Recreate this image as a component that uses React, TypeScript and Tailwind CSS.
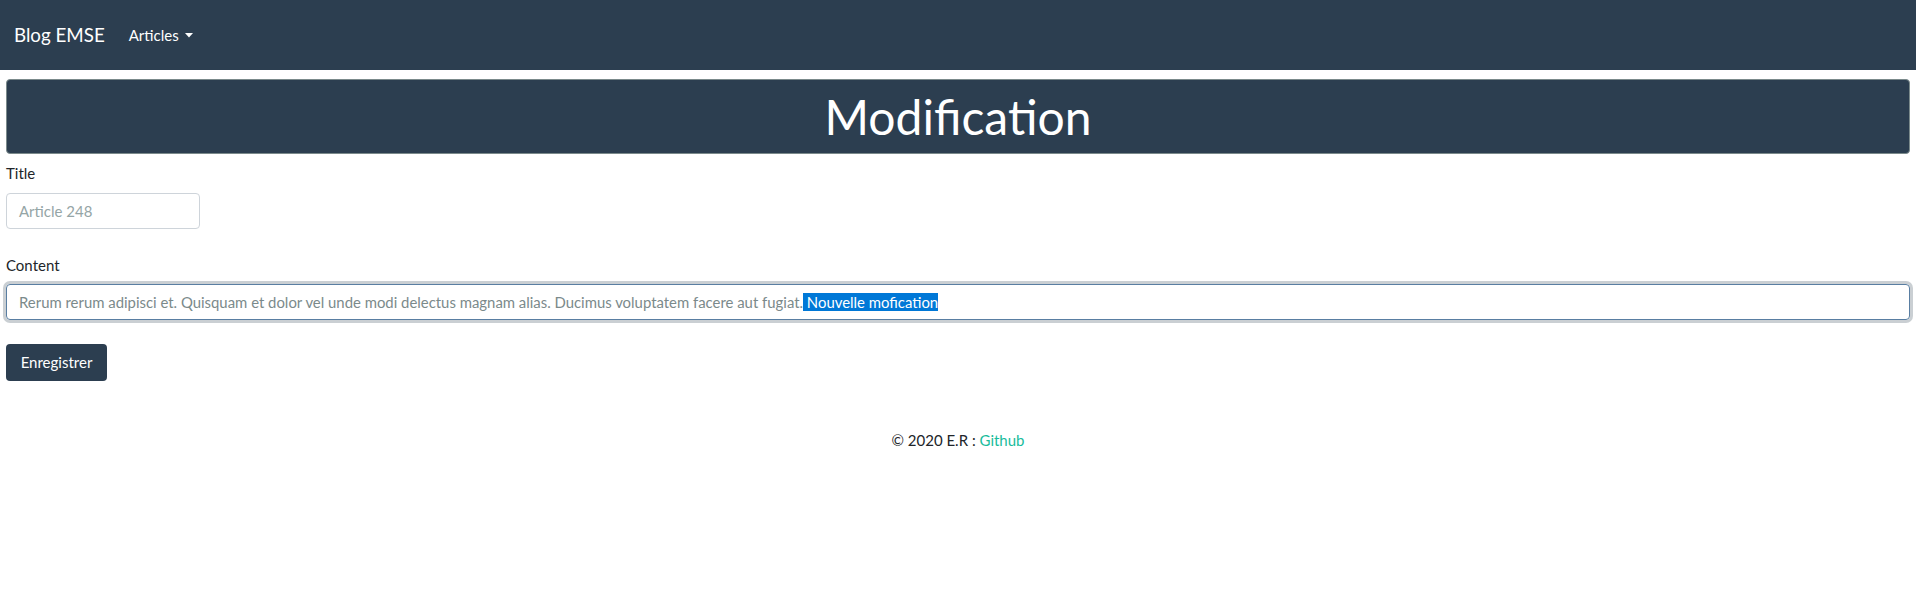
export default function App() {
  return (
    <div className="min-h-[604px] bg-white text-[15px] text-[#212529] font-['Lato','Liberation_Sans',sans-serif]">
      {/* Navbar */}
      <nav className="h-[70px] bg-[#2c3e50] flex items-center px-[14px]">
        <span className="text-white text-[18.75px] leading-none">Blog EMSE</span>
        <span className="ml-[24px] flex items-center text-white text-[15px] leading-none">
          Articles
          <svg className="ml-[6px]" width="8" height="5" viewBox="0 0 8 5">
            <path d="M0 0 L8 0 L4 4.5 Z" fill="white" />
          </svg>
        </span>
      </nav>

      <main className="px-[6px] pt-[9px]">
        {/* Header */}
        <div className="h-[75px] rounded-[4px] border border-[#7b8a8b] bg-[#2c3e50] flex items-center justify-center">
          <h1 className="text-white text-[48px] leading-none font-normal">Modification</h1>
        </div>

        {/* Form */}
        <div className="mt-[8px]">
          <label className="block leading-[22px] mb-[9px]">Title</label>
          <div className="w-[194px] h-[36px] rounded-[4px] border border-[#ced4da] flex items-center px-[12px] text-[#95a5a6]">
            Article 248
          </div>
        </div>

        <div className="mt-[25px]">
          <label className="block leading-[22px] mb-[8px]">Content</label>
          <div className="h-[36px] rounded-[4px] border border-[#597ea2] shadow-[0_0_0_3px_rgba(44,62,80,0.25)] flex items-center px-[12px] text-[14.9px] text-[#7b8a8b] whitespace-nowrap">
            Rerum rerum adipisci et. Quisquam et dolor vel unde modi delectus magnam alias. Ducimus voluptatem facere aut fugiat.
            <span className="bg-[#0078d7] text-white leading-[18px]">&nbsp;Nouvelle mofication</span>
          </div>
        </div>

        <button className="mt-[24px] h-[37px] w-[101px] rounded-[4px] bg-[#2c3e50] text-white text-[15px]">
          Enregistrer
        </button>

        {/* Footer */}
        <footer className="mt-[48px] text-center leading-[22px]">
          © 2020 E.R : <a className="text-[#18bc9c]">Github</a>
        </footer>
      </main>
    </div>
  );
}
